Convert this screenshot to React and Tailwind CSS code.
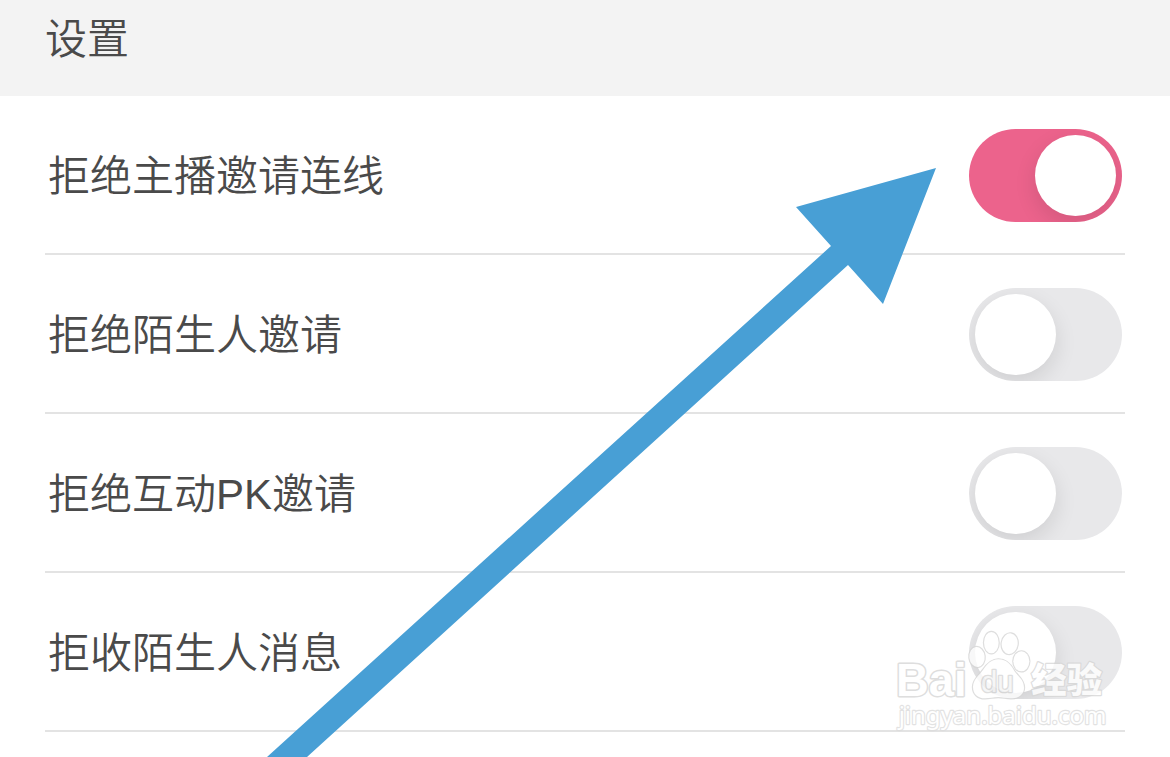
import { useState } from "react";

const OPTIONS = [
  { id: "host-link", label: "拒绝主播邀请连线", on: true },
  { id: "stranger-invite", label: "拒绝陌生人邀请", on: false },
  { id: "pk-invite", label: "拒绝互动PK邀请", on: false },
  { id: "stranger-message", label: "拒收陌生人消息", on: false },
];

function SettingRow({ id, label, on }) {
  const [checked, setChecked] = useState(on);
  return (
    <li className="flex h-[159px] items-center justify-between border-b-2 border-[#e3e3e3] px-[3px] pt-0.5">
      <label htmlFor={id} className="pt-0.5 text-[42px] leading-[60px] font-[350] text-[#4a4a4a]">
        {label}
      </label>
      <input
        id={id}
        type="checkbox"
        role="switch"
        checked={checked}
        onChange={(e) => setChecked(e.target.checked)}
        className="block h-[93px] w-[153px] shrink-0 cursor-pointer appearance-none overflow-hidden rounded-full bg-[#e8e8ea] p-[6px] before:block before:size-[81px] before:rounded-full before:bg-white before:shadow-[0_8px_22px_rgba(0,0,0,0.11)] before:content-[''] checked:bg-[#ec638c] checked:before:translate-x-[60px]"
      />
    </li>
  );
}

function Arrow() {
  return (
    <svg
      aria-hidden="true"
      viewBox="260 160 680 597"
      className="pointer-events-none absolute right-[230px] bottom-0 h-[597px] w-[680px]"
    >
      <path d="M936 168 796 207 831 246 267 757H307L848 265 883 304Z" fill="#489fd5" />
    </svg>
  );
}

function Watermark() {
  return (
    <svg
      viewBox="30 105 690 330"
      className="pointer-events-none absolute right-[50px] bottom-[22px] h-[110px] w-[230px] opacity-80"
      fill="#fff"
      stroke="#d6d6d6"
      strokeWidth="7"
      strokeLinejoin="round"
      paintOrder="stroke"
    >
      <text x="48" y="318" fontSize="136" fontWeight="700" fontFamily="'Liberation Sans', sans-serif" strokeWidth="9">
        Bai
      </text>
      <ellipse cx="334" cy="158" rx="22" ry="32" />
      <ellipse cx="389" cy="161" rx="24" ry="31" transform="rotate(8 389 161)" />
      <ellipse cx="291" cy="201" rx="23" ry="30" transform="rotate(-6 291 201)" />
      <ellipse cx="424" cy="214" rx="24" ry="30" />
      <path d="M355 208C380 208 393 224 403 243C413 259 432 268 432 293C432 315 413 325 393 325C377 325 369 321 355 321C340 321 330 325 315 325C293 325 279 312 279 291C279 268 297 257 309 240C320 224 333 208 355 208Z" />
      <text x="303" y="305" fontSize="88" fontFamily="'Liberation Sans', sans-serif" fill="#f4f4f4" strokeWidth="8">
        du
      </text>
      <text x="454" y="310" fontSize="106" fontWeight="900" fontFamily="'Noto Sans CJK SC', sans-serif">
        经验
      </text>
      <text x="56" y="403" fontSize="72" fontFamily="'Noto Sans', sans-serif" stroke="#dcdcdc">
        jingyan.baidu.com
      </text>
    </svg>
  );
}

export default function App() {
  return (
    <div className="relative min-h-screen overflow-hidden bg-white font-['Liberation_Sans','Noto_Sans_CJK_SC',sans-serif]">
      <header className="h-24 bg-[#f3f3f3] px-[45px] pt-[10px]">
        <h1 className="text-[42px] leading-[60px] font-[350] text-[#4a4a4a]">设置</h1>
      </header>
      <main className="px-[45px]">
        <ul>
          {OPTIONS.map((option) => (
            <SettingRow key={option.id} {...option} />
          ))}
        </ul>
      </main>
      <Arrow />
      <Watermark />
    </div>
  );
}
